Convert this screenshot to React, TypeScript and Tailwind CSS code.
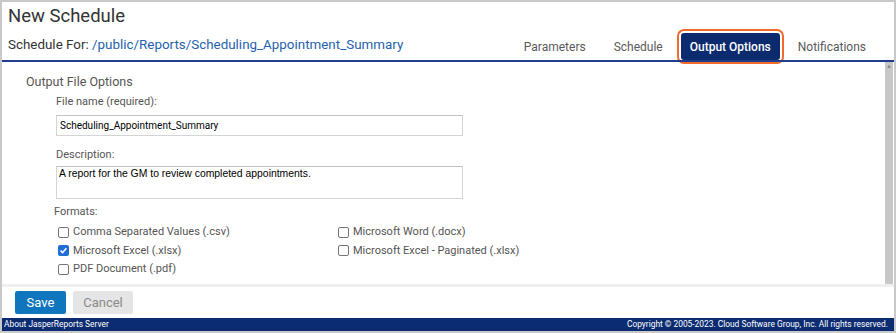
const tabs = ["Parameters", "Schedule", "Output Options", "Notifications"]

const formats = [
    { label: "Comma Separated Values (.csv)", checked: false },
    { label: "Microsoft Word (.docx)", checked: false },
    { label: "Microsoft Excel (.xlsx)", checked: true },
    { label: "Microsoft Excel - Paginated (.xlsx)", checked: false },
    { label: "PDF Document (.pdf)", checked: false },
]

const Box = ({ checked }: { checked: boolean }) => {
    if (checked) {
        return (
            <span className="flex h-[11px] w-[11px] items-center justify-center rounded-[2px] bg-[#1f6fd6]">
                <svg width="9" height="9" viewBox="0 0 9 9">
                    <path d="M1.6 4.6 L3.6 6.6 L7.4 2.2" fill="none" stroke="white" strokeWidth="1.5" />
                </svg>
            </span>
        )
    }
    return <span className="h-[11px] w-[11px] rounded-[2px] border border-[#767676] bg-white" />
}

const App = () => {
    return (
        <div className="flex h-[333px] w-[896px] flex-col border-2 border-[#c9c9c9] bg-white font-['Roboto',sans-serif] text-[#333]">
            {/* header */}
            <div className="pl-[6px]">
                <h1 className="text-[18.5px] leading-[28px] text-[#333]">New Schedule</h1>
            </div>
            <div className="flex h-[30px] items-end justify-between pl-[6px] pr-[18px]">
                <div className="self-center text-[13.4px] leading-[16px]">
                    Schedule For: <span className="text-[#1f62ad]">/public/Reports/Scheduling_Appointment_Summary</span>
                </div>
                <div className="flex items-end gap-[8px]">
                    {tabs.map((t) =>
                        t === "Output Options" ? (
                            <div
                                key={t}
                                className="flex h-[27px] items-center rounded-[3px] bg-[#0b2b6e] px-[9px] text-[12px] font-medium text-white outline-2 outline-offset-2 outline-[#f26a2c]"
                            >
                                {t}
                            </div>
                        ) : (
                            <div key={t} className="flex h-[27px] items-center px-[10px] text-[12px] text-[#5a5a5a]">
                                {t}
                            </div>
                        )
                    )}
                </div>
            </div>
            <div className="h-[2px] bg-[#1f3d8c]" />

            {/* scrolling content */}
            <div className="flex h-[222px]">
                <div className="flex-1 pl-[24px] pt-[11px] text-[#555]">
                    <h2 className="text-[12.5px] leading-[18px]">Output File Options</h2>
                    <div className="pl-[30px]">
                        <div className="mt-[3px] text-[11px] leading-[16px]">File name (required):</div>
                        <div className="mt-[5px] flex h-[21px] w-[407px] items-center border border-[#d4d4d4] border-t-[#c2c2c2] px-[3px] text-[10px] text-black">
                            Scheduling_Appointment_Summary
                        </div>
                        <div className="mt-[11px] text-[11px] leading-[16px]">Description:</div>
                        <div className="mt-[3px] h-[33px] w-[407px] border border-[#d4d4d4] border-t-[#c2c2c2] px-[2px] pt-[1px] font-['Liberation_Sans',sans-serif] text-[10.4px] leading-[12px] text-black">
                            A report for the GM to review completed appointments.
                        </div>
                        <div className="ml-[-2px] mt-[5px] text-[11px] leading-[16px]">Formats:</div>
                        <div className="ml-[2px] mt-[3px] grid grid-cols-[280px_1fr]">
                            {formats.map((f) => (
                                <div key={f.label} className="flex h-[18.5px] items-center gap-[4px] text-[11px]">
                                    <Box checked={f.checked} />
                                    <span>{f.label}</span>
                                </div>
                            ))}
                        </div>
                    </div>
                </div>
                <div className="mr-[1px] flex w-[8px] flex-col items-center bg-[#c7c7c7] pt-[1px]">
                    <span className="text-[6px] leading-[6px] text-[#888]">▲</span>
                </div>
            </div>
            <div className="h-[3px] bg-[#efefef]" />

            {/* buttons */}
            <div className="flex h-[31px] items-center gap-[7px] pl-[13px]">
                <button className="h-[23px] w-[51px] rounded-[2px] bg-[#0f76bd] text-[13px] text-white">Save</button>
                <button className="h-[23px] w-[60px] rounded-[2px] bg-[#e5e5e5] text-[13px] text-[#8a8a8a]">Cancel</button>
            </div>

            {/* footer */}
            <div className="flex h-[13px] items-center justify-between bg-[#0c2c72] pl-[2px] pr-[6px] text-[8.4px] leading-[13px] text-white">
                <span>About JasperReports Server</span>
                <span>Copyright © 2005-2023. Cloud Software Group, Inc. All rights reserved.</span>
            </div>
        </div>
    )
}

export default App
